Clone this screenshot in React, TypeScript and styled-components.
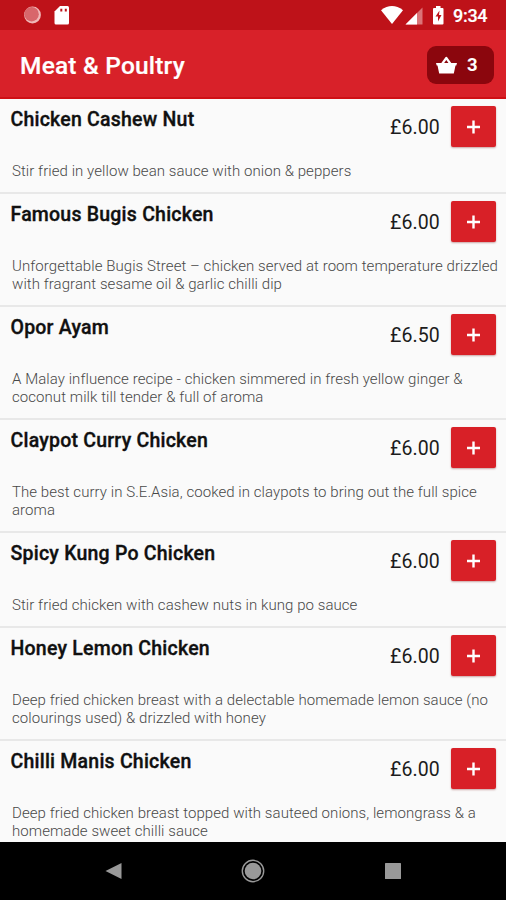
import React from "react";
import styled, { createGlobalStyle } from "styled-components";

const GlobalStyle = createGlobalStyle`
  * { box-sizing: border-box; }
  body { margin: 0; background: #000; font-family: Roboto, "Liberation Sans", sans-serif; }
`;

const Screen = styled.div`
  display: flex;
  flex-direction: column;
  width: 506px;
  height: 900px;
  overflow: hidden;
  background: #fafafa;
`;

const StatusBar = styled.div`
  display: flex;
  flex: none;
  justify-content: space-between;
  height: 30px;
  padding: 0 18px 0 24px;
  background: #be1219;
`;

const StatusGroup = styled.div`
  display: flex;
  align-items: center;
  svg { display: block; }
`;

const Clock = styled.span`
  margin-left: 8px;
  padding-top: 2px;
  width: 35px;
  color: #fff;
  font-size: 18px;
  font-weight: 500;
  line-height: 28px;
  letter-spacing: -0.3px;
  white-space: nowrap;
  -webkit-text-stroke: 0.2px #fff;
`;

const AppBar = styled.header`
  display: flex;
  flex: none;
  align-items: center;
  justify-content: space-between;
  height: 69px;
  padding: 0 12px 0 20px;
  background: #d82129;
  border-bottom: 2px solid #cf1015;
`;

const Heading = styled.h1`
  margin: 4px 0 0;
  color: #fff;
  font-size: 24.5px;
  font-weight: 500;
  line-height: 28px;
  letter-spacing: 0.2px;
  -webkit-text-stroke: 0.2px #fff;
`;

const BasketButton = styled.button`
  display: flex;
  align-items: center;
  width: 67px;
  height: 38px;
  margin-top: 2px;
  padding: 0 0 0 9px;
  gap: 10px;
  border: 0;
  border-radius: 9px;
  background: #8b060d;
  color: #fff;
  font: 700 18.5px/36px Roboto, sans-serif;
  svg { display: block; }
`;

const Menu = styled.main`
  flex: none;
  height: 743px;
  overflow: hidden;
`;

const Item = styled.article<{ $tall: boolean }>`
  display: flex;
  flex-direction: column;
  height: ${(p) => (p.$tall ? 113 : 95)}px;
  padding: 7px 0 0 10px;
  border-bottom: 2px solid #e8e8e8;
`;

const ItemTop = styled.div`
  display: flex;
  flex: none;
  height: 56px;
`;

const Name = styled.h2`
  flex: 1;
  margin: 2px 0 0 0.5px;
  color: #101010;
  font-size: 19.5px;
  font-weight: 500;
  line-height: 24px;
  letter-spacing: 0.22px;
  white-space: nowrap;
  -webkit-text-stroke: 0.35px #101010;
`;

const Price = styled.span`
  width: 61px;
  margin-top: 10px;
  color: #1c1c1c;
  font-size: 19.5px;
  letter-spacing: 0.1px;
  line-height: 24px;
  white-space: nowrap;
`;

const AddButton = styled.button`
  display: flex;
  align-items: center;
  justify-content: center;
  width: 45px;
  height: 41px;
  margin-right: 10px;
  padding: 0;
  border: 0;
  border-radius: 2px;
  background: #d82027;
  box-shadow: 0 1px 2px rgba(110, 0, 0, 0.35);
`;

const Description = styled.p`
  margin: 0 0 0 2px;
  color: #484848;
  font-size: 15px;
  font-weight: 300;
  line-height: 18px;
  letter-spacing: 0.065px;
  white-space: nowrap;
`;

const Line = styled.span`
  display: block;
`;

const NavBar = styled.nav`
  display: flex;
  flex: none;
  align-items: center;
  justify-content: space-between;
  height: 58px;
  padding: 0 104px 0 104px;
  background: #000;
  svg { display: block; }
`;

type Dish = { name: string; price: string; lines: string[] };

const dishes: Dish[] = [
  { name: "Chicken Cashew Nut", price: "£6.00", lines: ["Stir fried in yellow bean sauce with onion & peppers"] },
  { name: "Famous Bugis Chicken", price: "£6.00", lines: ["Unforgettable Bugis Street – chicken served at room temperature drizzled", "with fragrant sesame oil & garlic chilli dip"] },
  { name: "Opor Ayam", price: "£6.50", lines: ["A Malay influence recipe - chicken simmered in fresh yellow ginger &", "coconut milk till tender & full of aroma"] },
  { name: "Claypot Curry Chicken", price: "£6.00", lines: ["The best curry in S.E.Asia, cooked in claypots to bring out the full spice", "aroma"] },
  { name: "Spicy Kung Po Chicken", price: "£6.00", lines: ["Stir fried chicken with cashew nuts in kung po sauce"] },
  { name: "Honey Lemon Chicken", price: "£6.00", lines: ["Deep fried chicken breast with a delectable homemade lemon sauce (no", "colourings used) & drizzled with honey"] },
  { name: "Chilli Manis Chicken", price: "£6.00", lines: ["Deep fried chicken breast topped with sauteed onions, lemongrass & a", "homemade sweet chilli sauce"] },
];

const StatusLeft = () => (
  <StatusGroup>
    <svg width="48" height="30" viewBox="0 0 48 30">
      <circle cx="8.5" cy="15" r="8.4" fill="#f0b8b8" />
      <circle cx="7.6" cy="14.2" r="7.2" fill="#d8666b" />
      <path d="M36 6h7.5q1.5 0 1.5 1.5v15.500q0 1.500-1.500 1.500h-11.500q-1.500 0-1.500-1.500V11.500z" fill="#fff" />
      <path d="M36.300 8.800h2v2.700h-2zM40.800 8.800h2v2.700h-2z" fill="#be1219" />
    </svg>
  </StatusGroup>
);

const StatusIcons = () => (
  <svg width="64" height="30" viewBox="0 0 64 30">
    <path d="M0 10.200Q11 1.800 22 10.200L11 24z" fill="#fff" />
    <path d="M41.500 7.500V24.500H24.500z" fill="#db7478" />
    <path d="M36 13V24.500H24.500z" fill="#fff" />
    <path d="M55 6h4.500v2h2q1 0 1 1v14.500q0 1-1 1h-8.500q-1 0-1-1V9q0-1 1-1h2z" fill="#fff" />
    <path d="M58.500 10.500l-4 6h2.500v5l3.500-6.500h-2.500z" fill="#be1219" />
  </svg>
);

const App = () => (
  <>
    <GlobalStyle />
    <Screen>
      <StatusBar>
        <StatusLeft />
        <StatusGroup>
          <StatusIcons />
          <Clock>9:34</Clock>
        </StatusGroup>
      </StatusBar>
      <AppBar>
        <Heading>Meat &amp; Poultry</Heading>
        <BasketButton>
          <svg width="21" height="18" viewBox="0 0 21 18">
            <path d="M6 8l4.300-6 4.300 6" fill="none" stroke="#fff" strokeWidth="2.200" strokeLinejoin="round" />
            <path d="M0 7h21l-.7 2.500h-.8L17.800 17.500H3.200L1.500 9.500H.7z" fill="#fff" />
          </svg>
          3
        </BasketButton>
      </AppBar>
      <Menu>
        {dishes.map((dish) => (
          <Item key={dish.name} $tall={dish.lines.length > 1}>
            <ItemTop>
              <Name>{dish.name}</Name>
              <Price>{dish.price}</Price>
              <AddButton aria-label={`Add ${dish.name}`}>
                <svg width="14" height="14" viewBox="0 0 14 14">
                  <path d="M6.500 0.500v13M0 7h13" stroke="#fff" strokeWidth="2.400" />
                </svg>
              </AddButton>
            </ItemTop>
            <Description>
              {dish.lines.map((line) => (
                <Line key={line}>{line}</Line>
              ))}
            </Description>
          </Item>
        ))}
      </Menu>
      <NavBar>
        <svg width="18" height="18" viewBox="0 0 18 18"><path d="M1.500 9L17.500 1v16z" fill="#999" /></svg>
        <svg width="24" height="24" viewBox="0 0 24 24">
          <circle cx="12" cy="12" r="10.700" fill="none" stroke="#999" strokeWidth="1.400" />
          <circle cx="12" cy="12" r="8.300" fill="#999" />
        </svg>
        <svg width="18" height="18" viewBox="0 0 18 18"><rect x="1" y="1" width="16" height="16" rx="0.500" fill="#999" /></svg>
      </NavBar>
    </Screen>
  </>
);

export default App;
